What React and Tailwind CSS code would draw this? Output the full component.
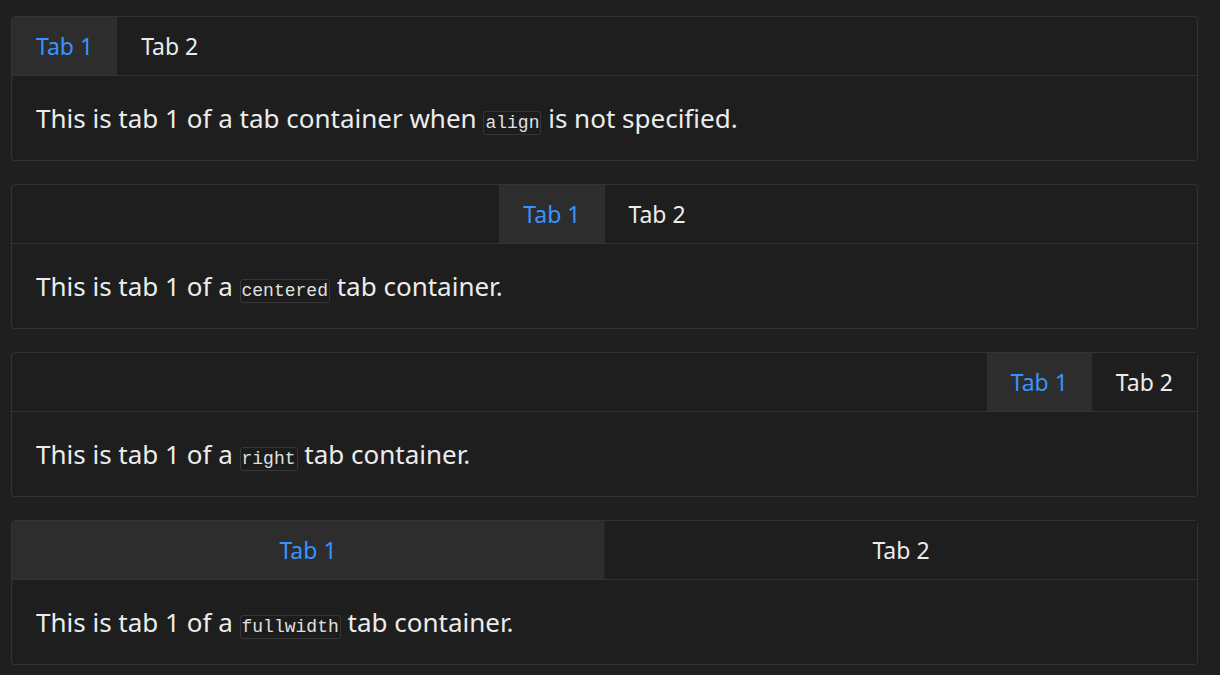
import { useState } from 'react';

const Code = ({ children }) => (
  <code className="font-['Liberation_Mono',monospace] text-[18px] leading-none text-[#e0e0e0] border border-[#363636] rounded-[3px] px-[1px] py-[1px] bg-[#1c1c1c]">
    {children}
  </code>
);

function Tabs({ align, children }) {
  const [active, setActive] = useState(0);
  const labels = ['Tab 1', 'Tab 2'];
  const justify =
    align === 'center' ? 'justify-center' : align === 'right' ? 'justify-end' : 'justify-start';
  const full = align === 'fullwidth';
  return (
    <div className="border border-[#333333] rounded-[4px] bg-[#1e1e1e]">
      <div className={`flex ${justify} border-b border-[#333333] h-[59px]`}>
        {labels.map((l, i) => (
          <button
            key={l}
            onClick={() => setActive(i)}
            className={`h-full px-6 text-[23px] ${full ? 'flex-1' : ''} ${
              active === i ? 'bg-[#2d2d2d] text-[#3794ff]' : 'bg-[#1e1e1e] text-[#ececec]'
            } ${full && i === 0 ? 'border-r border-[#262626]' : ''}`}
          >
            {l}
          </button>
        ))}
      </div>
      <div className="h-[84px] flex items-center px-6 text-[26px] text-[#ececec]">
        <p>{active === 0 ? children : 'This is tab 2.'}</p>
      </div>
    </div>
  );
}

export default function App() {
  return (
    <div className="min-h-screen bg-[#1f1f1f] font-['Noto_Sans',sans-serif] pt-[16px] pl-[11px] pr-[22px] flex flex-col gap-[23px]">
      <Tabs>
        This is tab 1 of a tab container when <Code>align</Code> is not specified.
      </Tabs>
      <Tabs align="center">
        This is tab 1 of a <Code>centered</Code> tab container.
      </Tabs>
      <Tabs align="right">
        This is tab 1 of a <Code>right</Code> tab container.
      </Tabs>
      <Tabs align="fullwidth">
        This is tab 1 of a <Code>fullwidth</Code> tab container.
      </Tabs>
    </div>
  );
}
